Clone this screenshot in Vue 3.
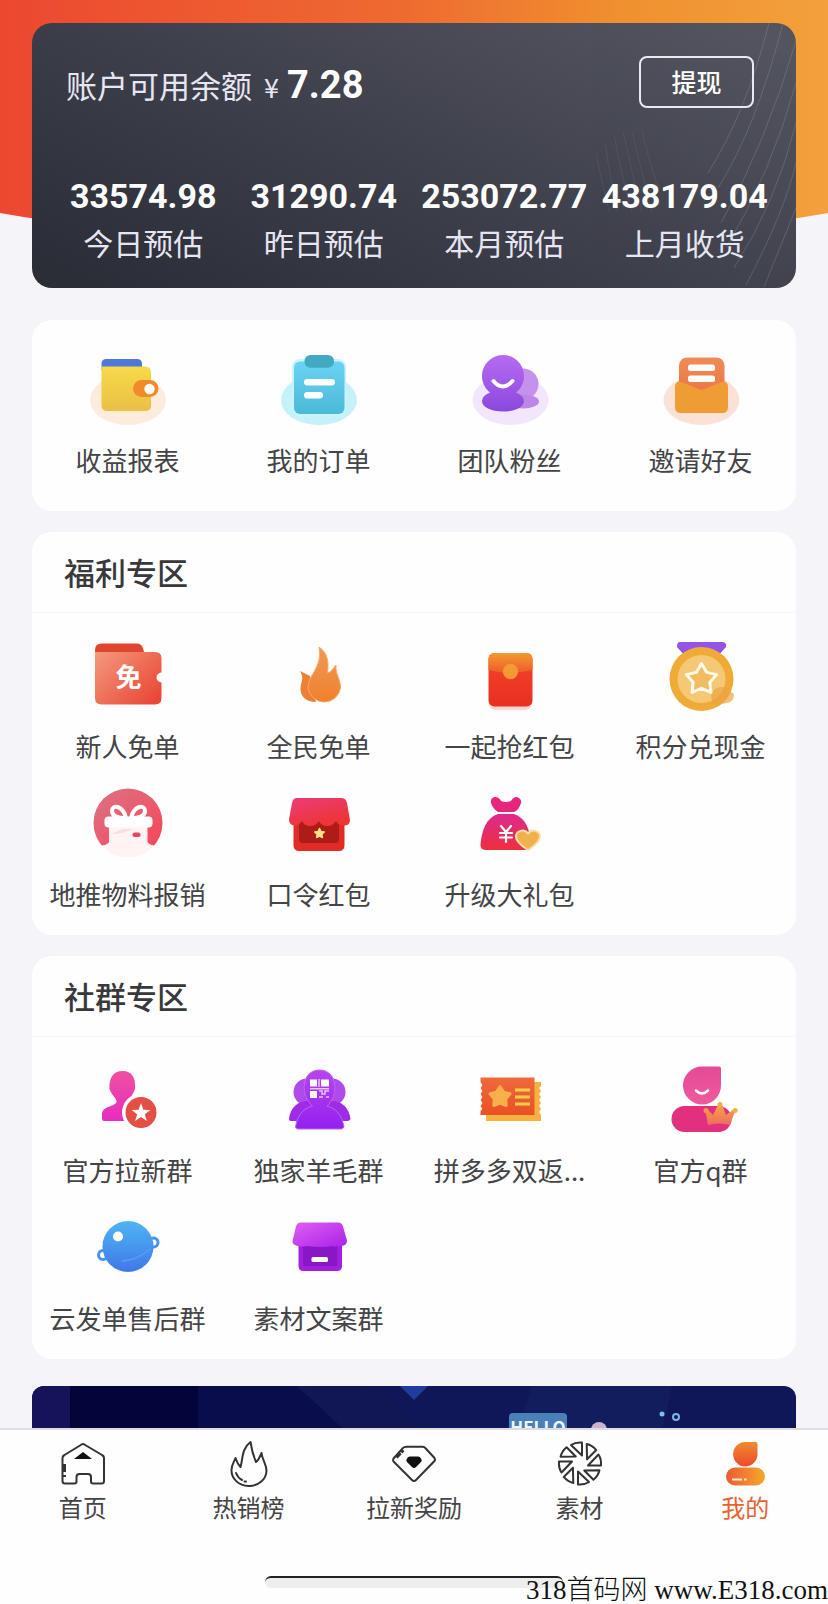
<script setup>
import { ref } from 'vue'

const balance = ref('7.28')
const activeTab = ref('mine')

const stats = [
  { value: '33574.98', label: '今日预估' },
  { value: '31290.74', label: '昨日预估' },
  { value: '253072.77', label: '本月预估' },
  { value: '438179.04', label: '上月收货' },
]

const services = [
  { icon: 'wallet', label: '收益报表' },
  { icon: 'order', label: '我的订单' },
  { icon: 'team', label: '团队粉丝' },
  { icon: 'invite', label: '邀请好友' },
]

const sections = [
  {
    title: '福利专区',
    items: [
      { icon: 'free', label: '新人免单' },
      { icon: 'flame', label: '全民免单' },
      { icon: 'packet', label: '一起抢红包' },
      { icon: 'medal', label: '积分兑现金' },
      { icon: 'gift', label: '地推物料报销' },
      { icon: 'shop', label: '口令红包' },
      { icon: 'bag', label: '升级大礼包' },
    ],
  },
  {
    title: '社群专区',
    items: [
      { icon: 'recruit', label: '官方拉新群' },
      { icon: 'group', label: '独家羊毛群' },
      { icon: 'ticket', label: '拼多多双返...' },
      { icon: 'crown', label: '官方q群' },
      { icon: 'planet', label: '云发单售后群' },
      { icon: 'store', label: '素材文案群' },
    ],
  },
]

const tabs = [
  { id: 'home', label: '首页' },
  { id: 'hot', label: '热销榜' },
  { id: 'reward', label: '拉新奖励' },
  { id: 'material', label: '素材' },
  { id: 'mine', label: '我的' },
]

// Points of a five-pointed star
const star = (cx, cy, r, inner = 0.5) =>
  Array.from({ length: 10 }, (_, i) => {
    const a = (Math.PI / 5) * i - Math.PI / 2
    const d = i % 2 ? r * inner : r
    return `${(cx + d * Math.cos(a)).toFixed(1)},${(cy + d * Math.sin(a)).toFixed(1)}`
  }).join(' ')

// Two-stop gradient, top to bottom unless told otherwise
const grad = (id, from, to, x2 = 0, y2 = 1) =>
  `<linearGradient id="${id}" x1="0" y1="0" x2="${x2}" y2="${y2}"><stop offset="0" stop-color="${from}"/><stop offset="1" stop-color="${to}"/></linearGradient>`

// Blades of the shutter icon
const blades = Array.from(
  { length: 8 },
  (_, i) => `<path d="M30 23.500H43Q43.500 17 40.500 12.500z" transform="rotate(${i * 45} 22 21.5)"/>`
).join('')

// Grid icons, 72 x 72
const icons = {
  wallet: `${grad('w1', '#f8da48', '#e9bf45')}
    <ellipse cx="36" cy="46" rx="38" ry="25" fill="#fdebdc"/>
    <path d="M9.500 16V10q0-5 5-5H45q5 0 5 5v6z" fill="#4f78dc"/>
    <path d="M9.500 12.500H53q6 0 6 6V51q0 6-6 6H15.500q-6 0-6-6z" fill="url(#w1)"/>
    <rect x="41" y="26" width="25.500" height="17" rx="8.500" fill="#f08a2c"/>
    <circle cx="57.500" cy="35" r="5.200" fill="#fffdf2"/>`,
  order: `${grad('o1', '#6ad3f3', '#4cb9d8')}
    <ellipse cx="36" cy="46" rx="38" ry="25" fill="#c4f1fa"/>
    <rect x="9" y="5" width="54" height="57" rx="8" fill="#c9f4fb"/>
    <rect x="11" y="7.500" width="50.500" height="52.500" rx="6" fill="url(#o1)"/>
    <rect x="21.500" y="1" width="29.500" height="12.700" rx="6" fill="#42a9c2"/>
    <rect x="21" y="25" width="31" height="6.500" rx="3.200" fill="#fff"/>
    <rect x="21" y="38" width="19" height="6.500" rx="3.200" fill="#fff"/>`,
  team: `${grad('t1', '#b76bf3', '#8a48dc')}
    <ellipse cx="36.500" cy="46" rx="38" ry="25" fill="#f2e6fc"/>
    <circle cx="49" cy="30" r="15.500" fill="#c492ec"/>
    <ellipse cx="49" cy="47.500" rx="16" ry="7" fill="#bd86e8"/>
    <path d="M29 1a21 21 0 0 1 13 37.500q8 3 8 8.500c0 6-9 10.500-21 10.500S8 53 8 47q0-5.500 8-8.500A21 21 0 0 1 29 1z" fill="url(#t1)"/>
    <path d="M19.500 27q9 11 19 0" fill="none" stroke="#fff" stroke-width="4" stroke-linecap="round"/>`,
  invite: `${grad('i1', '#f08c58', '#ea7040')}
    <ellipse cx="36.500" cy="46" rx="38" ry="25" fill="#fbe1d6"/>
    <rect x="14" y="3.500" width="45.500" height="45" rx="8" fill="url(#i1)"/>
    <path d="M10 33q0-5.500 5-5.500l21.500 8.500L58 27.500q5 0 5 5.500v20q0 6-6 6H16q-6 0-6-6z" fill="#f09c34"/>
    <rect x="23" y="10.500" width="27" height="6.500" rx="2.500" fill="#fff"/>
    <rect x="23" y="21.500" width="27" height="6.500" rx="2.500" fill="#fff"/>`,
  free: `${grad('f1', '#f49a7c', '#e94838', 1, 0.8)}
    <path d="M3 20V10q0-6.500 6.500-6.500H45q6 0 7 8.500z" fill="#e0462f"/>
    <path d="M3 12H63q6.500 0 6.500 6v14.500a5 5 0 0 0 0 10V58q0 6.500-6.500 6.500H9.500Q3 64.500 3 58z" fill="url(#f1)"/>
    <text x="36.500" y="46.500" font-size="26" font-weight="700" text-anchor="middle" fill="#fff">免</text>`,
  flame: `${grad('l1', '#ee9a58', '#f0802c')}
    <path d="M17 31q6 3 10 5L33 62C22 62 17 55 17.500 48c.500-7 4-9-.500-17z" fill="#ec8034"/>
    <path d="M36 7c9 6 10 16 8.500 26 4-1 5-4 8.500-8-1 9 4.500 13 4.500 23A16.500 17 0 0 1 25 48C25 34 40 28 36 7z" fill="url(#l1)" stroke="#f6ab60" stroke-width="1"/>`,
  packet: `${grad('p1', '#f2452c', '#ea2f20')}${grad('p2', '#f49a30', '#ef5a2a')}
    <rect x="15" y="20" width="43" height="50" rx="7" fill="#fbd5cf"/>
    <rect x="14.500" y="13" width="44" height="53.500" rx="6" fill="url(#p1)"/>
    <path d="M14.500 30V19q0-6 6-6H52.500q6 0 6 6V30q-22 6-44 0z" fill="url(#p2)"/>
    <circle cx="36.500" cy="31.500" r="7.700" fill="#f39a35"/>`,
  medal: `<path d="M15 2H58q4 1 3 5l-9 10H21L12 7q0-5 3-5z" fill="#9554e8"/>
    <circle cx="36.500" cy="39" r="32" fill="#efab35"/>
    <circle cx="36.500" cy="39" r="24" fill="#f4c875"/>
    <path d="M46 55q4-11 16-7 3 4 7 6 0 8-7 9-6 1-9 2-7 0-7-10z" fill="#eda445" opacity="0.7"/>
    <polygon points="${star(36.5, 39.5, 16, 0.55)}" fill="#f2bd62" stroke="#fffbe9" stroke-width="3" stroke-linejoin="round"/>`,
  gift: `${grad('g1', '#dc7484', '#f4465a', 1, 1)}
    <clipPath id="gc"><circle cx="36" cy="35" r="34.500"/></clipPath>
    <g clip-path="url(#gc)">
      <path d="M0 0H72V58H0z" fill="url(#g1)"/>
      <path d="M17 36H55.500V54q3 5 12 2V72H5V56q9 3 12-2z" fill="#fff3f4"/>
      <rect x="12.500" y="28.500" width="48" height="11" rx="4" fill="#fff"/>
      <path d="M34 30C31 17 20 16 20 23c0 5 6 7 14 7zM39 30c3-13 14-14 14-7 0 5-6 7-14 7z" fill="none" stroke="#fff" stroke-width="4"/>
      <path d="M19 46q12 0 22-5l-10 0z" fill="#f9dce0"/>
      <rect x="40.500" y="44.500" width="8" height="4.500" rx="2" fill="#e24b5e"/>
    </g>`,
  shop: `${grad('s1', '#ec3c78', '#ee3434', 0.5, 1)}
    <path d="M10.500 30H61.500V57q0 6-6 6H16.500q-6 0-6-6z" fill="#e22a26"/>
    <path d="M16 32H56V51q0 4-4 4H20q-4 0-4-4z" fill="#ae1c18"/>
    <path d="M14 10H58q5 0 6 5l3 17q0 5-5 5.500-7 0-9-4.500-3 5-9 5t-8-5q-3 5-9 5t-8-5q-3 4.500-8 4.500-5-1-5-6L9 15q1-5 5-5z" fill="url(#s1)"/>
    <polygon points="${star(36.5, 45.5, 5)}" fill="#fbe08a" stroke="#fbe08a" stroke-width="1.500" stroke-linejoin="round"/>`,
  bag: `${grad('b1', '#dc2a90', '#ee2f3f')}
    <path d="M21 9q4 0 6 4 5 2 10 0 2-4 6-4 5 2 4 6-2 7-7 9H24q-5-3-7-9-1-5 4-6z" fill="#e8247c"/>
    <path d="M24 26H40C52 30 56 42 57 56q0 6-6 6H12q-6 0-5.500-6C8 42 12 30 24 26z" fill="url(#b1)"/>
    <path d="M27 38l5 6 5-6M32 44v10M26 45h12M26 49.500h12" fill="none" stroke="#fff" stroke-width="2.200" stroke-linecap="round"/>
    <path d="M54 62C46 57 42 53 42 48.500c0-6 8-8 12-3 4-5 12-3 12 3C66 53 62 57 54 62z" fill="#f0b04c" stroke="#f9dfa8" stroke-width="2"/>`,
  recruit: `${grad('r1', '#f050a0', '#e62cc0')}
    <path d="M30.500 7C40 7 44 14 43 25c-2 6-6 9-6 14 0 4 10 5 14 10v8H12q-2 0-2-2V50c1-9 15-7 14.500-13-1-4-5-6-7-12C17 14 21 7 30.500 7z" fill="url(#r1)"/>
    <circle cx="49" cy="48.500" r="19" fill="#fff"/>
    <circle cx="49" cy="48.500" r="15.500" fill="#e34e45"/>
    <polygon points="${star(49, 49, 10, 0.4)}" fill="#fff"/>`,
  group: `${grad('u1', '#b545f0', '#9420ee')}
    <circle cx="24" cy="28" r="13.500" fill="#b04ae8"/>
    <circle cx="49" cy="28" r="13.500" fill="#b04ae8"/>
    <path d="M6 55c1-12 10-18 18-18h25c9 0 17 6 18.500 18q-1 2-3 2H9q-3 0-3-2z" fill="#a02be4"/>
    <path d="M12.500 63c2-14 11-20 17-21C17 32 18 6 36.500 6S56 32 44 42c8 2 15 8 17 21q-1 2-3 2H15q-2 0-2.500-2z" fill="url(#u1)" stroke="#bb66ee" stroke-width="1"/>
    <path d="M27 15.500h7v7h-7zM38 15.500h8v7h-8zM27 27h7v7h-7z" fill="#fff"/>
    <path d="M36 15v8M27 24.700h19M36 27h3v3h3v-3h4M36 33h4M43 33h3" fill="none" stroke="#e7c4fb" stroke-width="1.500"/>`,
  ticket: `${grad('k1', '#ee6a3c', '#ea5024')}
    <path d="M12 18H67v4l-2 2 2 3-2 3 2 3-2 3 2 3-2 3 2 3-2 3 2 3v6H12z" fill="#f5b23c"/>
    <path d="M6.500 13.500H60.500V51H6.500v-4l2-2-2-3 2-3-2-3 2-3-2-3 2-3-2-3 2-3-2-3z" fill="url(#k1)"/>
    <polygon points="${star(26, 33, 10.5, 0.58)}" fill="#f7b04a" stroke="#f7b04a" stroke-width="3" stroke-linejoin="round"/>
    <path d="M41 26H56M41 33H56M41 40H56" stroke="#fbd24c" stroke-width="3"/>`,
  crown: `${grad('c1', '#e44a98', '#ee5a9c')}${grad('c2', '#f6b040', '#ee6a62')}
    <path d="M37 2.500H54q2 0 2 2V21A19 19 0 1 1 37 2.500z" fill="url(#c1)"/>
    <path d="M31 26.500q6 6 12 0" fill="none" stroke="#fff" stroke-width="2.500" stroke-linecap="round"/>
    <rect x="6.500" y="42" width="60" height="26" rx="13" fill="#e3307e"/>
    <path d="M43 61L41 50l-2-4 3-1 6 6 6-12 2-1 5 13 8-6 4 1-4 4-4 11q-11-3-22 0z" fill="url(#c2)"/>
    <circle cx="41" cy="46.500" r="2.500" fill="#f3974c"/><circle cx="55" cy="40.500" r="2.500" fill="#f6b040"/><circle cx="70" cy="46.500" r="2.500" fill="#f6b040"/>`,
  planet: `${grad('n1', '#4fb4f4', '#3f78e8')}
    <circle cx="11" cy="43" r="4.500" fill="none" stroke="#4794ee" stroke-width="3"/>
    <circle cx="61.500" cy="30.500" r="4.500" fill="none" stroke="#4794ee" stroke-width="3"/>
    <circle cx="36" cy="34.500" r="25.500" fill="url(#n1)"/>
    <path d="M30 49Q46 48 58 37" fill="none" stroke="#5a9df2" stroke-width="1.500"/>
    <circle cx="26" cy="24.500" r="5" fill="#fff"/>`,
  store: `${grad('e1', '#e060f4', '#a822e8', 1, 1)}
    <path d="M15.500 30H59V54q0 5-5 5H20.500q-5 0-5-5z" fill="#a21fdf"/>
    <path d="M20 34H54V54H20z" fill="#8a17c6"/>
    <path d="M18 10.500H55q4 0 5 4l4 14q0 5-6 5.500-6 1-9 0-12 2-25 0-4 1-9 0-6-1-5.500-5L13 14.500q1-4 5-4z" fill="url(#e1)"/>
    <rect x="28.500" y="45" width="16.500" height="5" rx="1.500" fill="#fff"/>`,
}

// Tab icons, 44 x 44
const tabIcons = {
  home: `<path d="M22 2Q23 2 25 3.500L41 13q2 1 2 3V39q0 2.500-2.500 2.500H32q-2 0-2-2V35q0-3-3-3H18.500q-3 0-3 3v4.500q0 2-2 2H4q-2.500 0-2.500-2.500V16q0-2 2-3L19 3.500Q21 2 22 2z"/>
    <path d="M22 10l9 7H13z" fill="currentColor" stroke="none"/>
    <path d="M3.500 22v8M3.500 33v2" stroke-width="3"/>`,
  hot: `<path d="M24.500 0c1 7 3 14 5.500 20 3-2 4-6 5.500-9 1 8 5 11 5 18A17.500 15.500 0 0 1 5.500 28C5.500 23 8 20 9.500 16q2 6 5 9C17 18 15 7 24.500 0z"/>
    <path d="M10 31q2 5 6 7M18.500 39.500h1.500" stroke-linecap="round"/>`,
  reward: `<path d="M14.500 4.700H30.500q2 0 3 1.500L42.500 16q1 1.500 0 3L24 38q-2 2-4 0L1.500 19.500q-1-1.500 0-3L11 6q1-1.300 3.500-1.300z"/>
    <path d="M4.500 15.500l7-7.500" stroke-width="3" stroke-dasharray="6 1 3"/>
    <path d="M18 14.500h8q2 0 3 2 1.500 2 0 3.500l-5 5q-2 2-4 0l-5-5q-1.500-1.500 0-3.500 1-2 3-2z" fill="currentColor" stroke="none"/>`,
  material: blades,
  mine: `${grad('m1', '#f08a30', '#ee4a2c')}${grad('m2', '#ee5a34', '#f4a92c', 1, 0)}
    <path d="M22 0H32.500q2 0 2 2V11.500A12.200 12.200 0 1 1 22 0z" fill="url(#m1)" stroke="none"/>
    <rect x="3" y="25.500" width="39" height="18" rx="9" fill="url(#m2)" stroke="none"/>
    <path d="M9 37.500h10M21 37.500h2.500" stroke="#ffe9cf" stroke-width="2"/>`,
}
</script>

<template>
  <div class="page">
    <main class="content">
      <div class="backdrop"></div>

      <section class="account">
        <svg class="account-lines" viewBox="0 0 200 265" fill="none" stroke="#8f90a2" aria-hidden="true">
          <path d="M173 0Q150 90 112 150M187 0Q160 105 122 165M200 18Q170 120 125 200M200 60Q175 150 130 225M200 100Q180 180 138 245M200 140Q188 190 150 262M200 185L168 264" />
          <g opacity="0.4">
            <path d="M0 130Q8 170 14 190M9 120Q15 160 22 190M18 112Q26 155 36 190M27 108Q36 150 46 190M36 108Q46 150 56 190M46 108Q54 140 62 165" />
          </g>
        </svg>
        <div class="account-top">
          <p class="balance">
            <span>账户可用余额</span>
            <span class="currency">¥</span>
            <strong>{{ balance }}</strong>
          </p>
          <button type="button" class="withdraw">提现</button>
        </div>
        <dl class="stats">
          <div v-for="s in stats" :key="s.label" class="stat">
            <dt>{{ s.label }}</dt>
            <dd>{{ s.value }}</dd>
          </div>
        </dl>
      </section>

      <nav class="card services">
        <a v-for="item in services" :key="item.label" href="#" class="entry">
          <svg class="entry-icon" viewBox="0 0 72 72" aria-hidden="true" v-html="icons[item.icon]"></svg>
          <span>{{ item.label }}</span>
        </a>
      </nav>

      <section v-for="section in sections" :key="section.title" class="card">
        <h2>{{ section.title }}</h2>
        <div class="entries">
          <a v-for="item in section.items" :key="item.label" href="#" class="entry">
            <svg class="entry-icon" viewBox="0 0 72 72" aria-hidden="true" v-html="icons[item.icon]"></svg>
            <span>{{ item.label }}</span>
          </a>
        </div>
      </section>

      <a href="#" class="banner" aria-label="HELLO">
        <svg class="banner-art" viewBox="0 0 764 180" preserveAspectRatio="xMidYMin slice">
          <path d="M0 0H38V180H0z" fill="#15135a" />
          <path d="M38 0H166V180H38z" fill="#03053a" />
          <path d="M166 0H265L330 60V180H166z" fill="#090d4a" />
          <path d="M265 0H350L420 80V180H330V60z" fill="#101752" />
          <path d="M368 0H396L382 14z" fill="#1f3c9e" />
          <path d="M500 0H640L600 180H440z" fill="#142260" opacity="0.6" />
          <rect x="477" y="27" width="58" height="50" rx="4" fill="#4a80b8" />
          <text x="506" y="48" font-size="17" font-weight="700" text-anchor="middle" fill="#f0f7fc">HELLO</text>
          <circle cx="567" cy="44" r="8" fill="#cbb2cf" />
          <circle cx="630" cy="28" r="2.500" fill="#7fc0ea" />
          <circle cx="644" cy="31" r="3" fill="none" stroke="#7fb6e6" stroke-width="2" />
        </svg>
      </a>
    </main>

    <footer class="tabbar">
      <nav class="tabs">
        <a
          v-for="tab in tabs"
          :key="tab.id"
          href="#"
          class="tab"
          :class="{ active: tab.id === activeTab }"
          @click.prevent="activeTab = tab.id"
        >
          <svg class="tab-icon" viewBox="0 0 44 44" aria-hidden="true" v-html="tabIcons[tab.id]"></svg>
          <span>{{ tab.label }}</span>
        </a>
      </nav>
      <div class="home-indicator"></div>
      <p class="site-mark">318首码网 www.E318.com</p>
    </footer>
  </div>
</template>

<style>
body {
  background: #f5f4f8;
}
</style>

<style scoped>
.page {
  display: flex;
  flex-direction: column;
  height: 100vh;
  background: #f5f4f8;
  color: #444446;
  font-family: "Noto Sans CJK SC", sans-serif;
}

.content {
  position: relative;
  flex: 1;
  min-height: 0;
  overflow-y: auto;
  scrollbar-width: none;
  box-sizing: border-box;
  padding: 23px 32px 24px;
}

.backdrop {
  position: absolute;
  top: 0;
  left: 0;
  right: 0;
  height: 246px;
  background: linear-gradient(to right, #ec4830, #ee6a30 48%, #f0902f 75%, #f2a13c);
  clip-path: ellipse(100% 100% at 50% 0);
}

.account {
  position: relative;
  overflow: hidden;
  padding: 33px 0 28px;
  border-radius: 20px;
  background: linear-gradient(25deg, #2b2d37 5%, #3c3e49 45%, #54555f 95%);
  color: #fff;
}

.account-lines {
  position: absolute;
  top: 0;
  right: 0;
  height: 100%;
  opacity: 0.35;
}

.account-top {
  position: relative;
  display: flex;
  align-items: center;
  justify-content: space-between;
  height: 52px;
  padding: 0 42px 0 34px;
}

.balance {
  display: flex;
  align-items: baseline;
  margin: 0;
  padding-top: 8px;
  font-size: 31px;
  line-height: 44px;
  color: #e6e6f2;
}

.currency {
  margin: 0 8px 0 12px;
  font-size: 27px;
}

.balance strong {
  font-family: Roboto, sans-serif;
  font-size: 38px;
  font-weight: 700;
  color: #fff;
}

.withdraw {
  width: 115px;
  height: 52px;
  padding: 0 0 2px;
  border: 2px solid #e9e9f2;
  border-radius: 8px;
  background: transparent;
  color: #fff;
  font: 500 25px "Noto Sans CJK SC", sans-serif;
}

.stats {
  position: relative;
  display: grid;
  grid-template-columns: repeat(4, 1fr);
  margin: 68px 0 0;
  padding: 0 21px;
}

.stat {
  display: flex;
  flex-direction: column-reverse;
  gap: 8px;
  align-items: center;
}

.stat dt {
  font-size: 30px;
  line-height: 36px;
  color: #e6e6f2;
}

.stat dd {
  margin: 0;
  font-family: Roboto, sans-serif;
  font-size: 34px;
  line-height: 40px;
  font-weight: 700;
}

.card {
  position: relative;
  margin-top: 21px;
  border-radius: 20px;
  background: #fefefe;
}

.card h2 {
  margin: 0;
  padding: 0 32px;
  border-bottom: 1px solid #f6f6f8;
  font-size: 31px;
  line-height: 80px;
  font-weight: 500;
  color: #39393b;
}

.services,
.entries {
  display: grid;
  grid-template-columns: repeat(4, 1fr);
  row-gap: 25px;
  padding: 27px 0 24px;
}

.services {
  margin-top: 32px;
  padding: 34px 0;
}

.entry {
  display: flex;
  flex-direction: column;
  align-items: center;
  gap: 17px;
  color: inherit;
  font-size: 26px;
  line-height: 34px;
  text-decoration: none;
  white-space: nowrap;
}

.entry-icon {
  width: 72px;
  height: 72px;
  overflow: visible;
}

.banner {
  position: relative;
  display: block;
  height: 180px;
  margin-top: 27px;
  border-radius: 12px;
  overflow: hidden;
  background: #101758;
}

.banner-art {
  display: block;
  width: 100%;
  height: 100%;
}

.tabbar {
  position: relative;
  display: flex;
  flex-direction: column;
  justify-content: space-between;
  align-items: center;
  height: 176px;
  box-sizing: border-box;
  padding: 12px 0 16px;
  border-top: 2px solid #dedee2;
  background: #fefefe;
}

.tabs {
  display: grid;
  grid-template-columns: repeat(5, 1fr);
  width: 100%;
}

.tab {
  display: flex;
  flex-direction: column;
  align-items: center;
  gap: 6px;
  color: #444446;
  font-size: 24px;
  line-height: 30px;
  text-decoration: none;
}

.tab.active {
  color: #e8622f;
}

.tab-icon {
  width: 44px;
  height: 44px;
  overflow: visible;
  fill: none;
  stroke: #333;
  stroke-width: 2;
  stroke-linejoin: round;
  color: #111;
}

.home-indicator {
  width: 36%;
  height: 12px;
  box-sizing: border-box;
  border-top: 2px solid #222;
  border-radius: 6px;
  background: #eee;
}

.site-mark {
  position: absolute;
  right: 0;
  bottom: 0;
  margin: 0;
  color: #111;
  font-family: "Liberation Serif", "Noto Sans CJK SC", serif;
  font-size: 27px;
  font-weight: 300;
  line-height: 28px;
  white-space: nowrap;
}
</style>
